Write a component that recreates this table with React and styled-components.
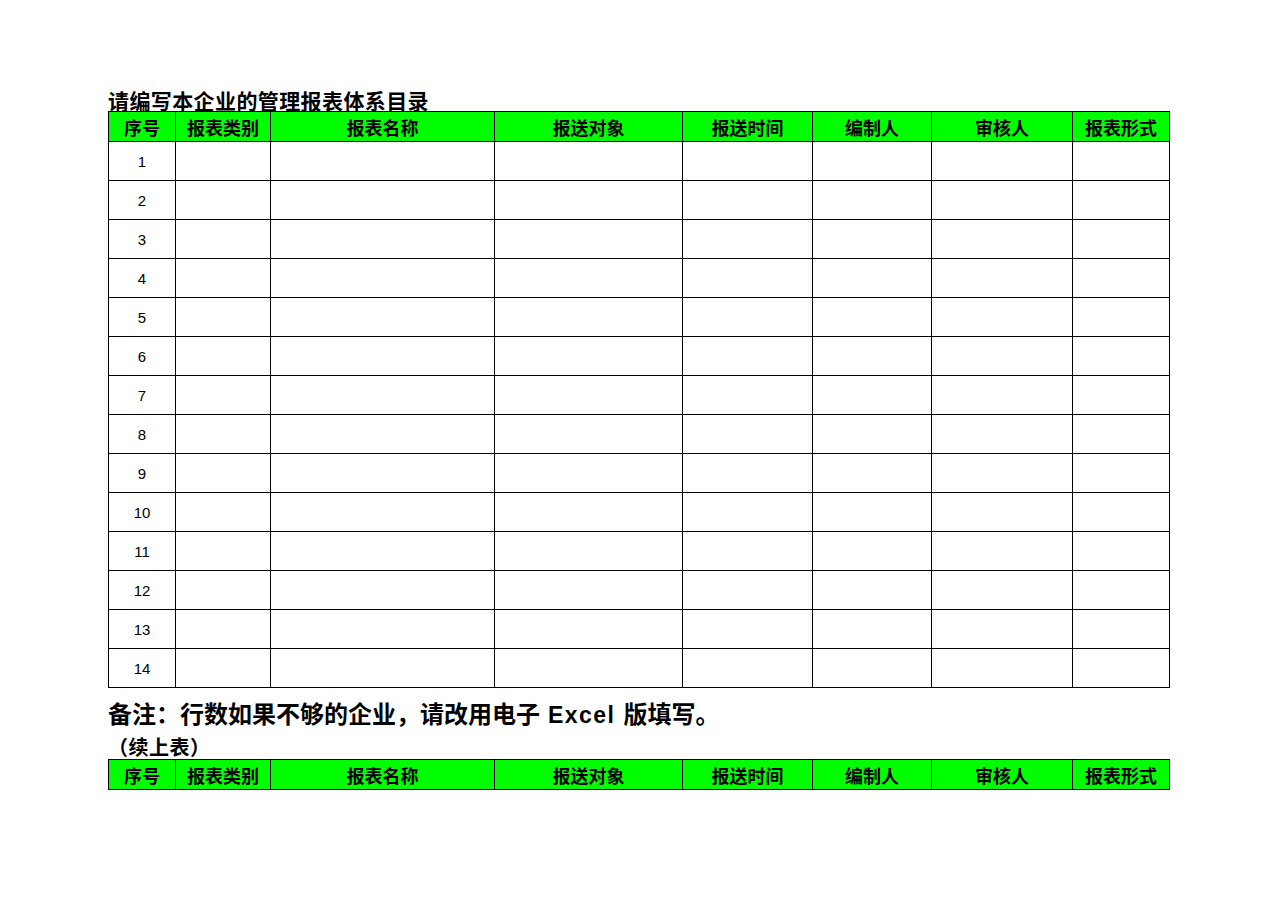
import React from 'react';
import styled, { createGlobalStyle } from 'styled-components';

const GlobalStyle = createGlobalStyle`
  html, body {
    margin: 0;
    padding: 0;
    background: #ffffff;
  }
  body {
    font-family: "Liberation Sans", "Noto Sans CJK SC", sans-serif;
    color: #000;
  }
`;

const columns = [
  { title: '序号', width: 67 },
  { title: '报表类别', width: 95 },
  { title: '报表名称', width: 224 },
  { title: '报送对象', width: 188 },
  { title: '报送时间', width: 130 },
  { title: '编制人', width: 119 },
  { title: '审核人', width: 141 },
  { title: '报表形式', width: 97 },
];

const rows = Array.from({ length: 14 }, (_, i) => i + 1);

// 表头（两张表共用）
function SheetHead() {
  return (
    <>
      <colgroup>
        {columns.map((c) => (
          <col key={c.title} style={{ width: c.width }} />
        ))}
      </colgroup>
      <thead>
        <HeadRow>
          {columns.map((c) => (
            <HeadCell key={c.title}>{c.title}</HeadCell>
          ))}
        </HeadRow>
      </thead>
    </>
  );
}

export default function App() {
  return (
    <Page>
      <GlobalStyle />
      <Title>请编写本企业的管理报表体系目录</Title>
      <Sheet>
        <SheetHead />
        <tbody>
          {rows.map((n) => (
            <BodyRow key={n}>
              <NumCell>{n}</NumCell>
              {columns.slice(1).map((c) => (
                <Cell key={c.title} />
              ))}
            </BodyRow>
          ))}
        </tbody>
      </Sheet>
      <Note>
        备注：行数如果不够的企业，请改用电子<Latin> Excel </Latin>版填写。
      </Note>
      <Continued>（续上表）</Continued>
      <Sheet>
        <SheetHead />
      </Sheet>
    </Page>
  );
}

const Page = styled.div`
  width: 1286px;
  min-height: 909px;
  padding: 89px 0 0 108px;
  box-sizing: border-box;
`;

const Title = styled.div`
  font-family: "Noto Sans CJK SC", sans-serif;
  font-weight: 700;
  font-size: 21px;
  line-height: 22px;
  height: 22px;
  letter-spacing: 0.4px;
`;

const Sheet = styled.table`
  border-collapse: collapse;
  table-layout: fixed;
  width: 1062px;
`;

const HeadRow = styled.tr`
  height: 30px;
  background: #00ff00;
`;

const HeadCell = styled.th`
  border: 1px solid #000;
  padding: 0;
  font-family: "Noto Sans CJK SC", sans-serif;
  font-weight: 700;
  font-size: 18px;
  line-height: 28px;
  text-align: center;
  vertical-align: middle;
`;

const BodyRow = styled.tr`
  height: 39px;
`;

const Cell = styled.td`
  border: 1px solid #000;
  padding: 0;
`;

const NumCell = styled(Cell)`
  font-family: "Liberation Sans", sans-serif;
  font-size: 15px;
  text-align: center;
  vertical-align: middle;
`;

const Note = styled.div`
  margin-top: 10px;
  font-family: "Noto Sans CJK SC", sans-serif;
  font-weight: 700;
  font-size: 24px;
  line-height: 30px;
  height: 30px;
  white-space: pre;
`;

const Latin = styled.span`
  font-family: "Liberation Sans", sans-serif;
  font-weight: 700;
  font-size: 23px;
  letter-spacing: 1.5px;
`;

const Continued = styled.div`
  margin-top: 7px;
  font-family: "Noto Sans CJK SC", sans-serif;
  font-weight: 700;
  font-size: 20px;
  line-height: 24px;
  height: 24px;
  letter-spacing: 0.5px;
`;
